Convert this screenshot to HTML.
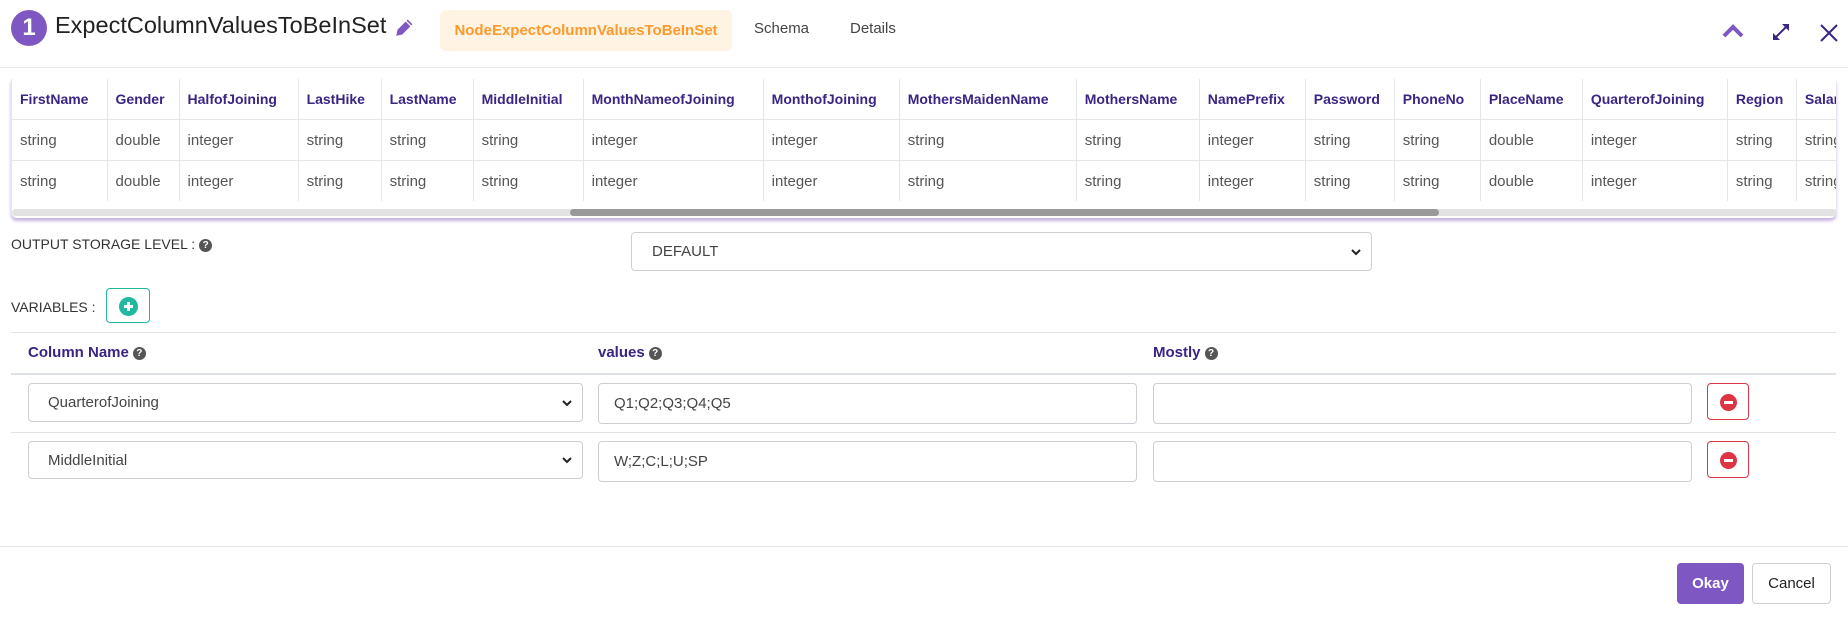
<!DOCTYPE html>
<html><head><meta charset="utf-8"><style>
*{box-sizing:border-box;margin:0;padding:0}
body{width:1848px;height:617px;background:#fff;font-family:"Liberation Sans",Arial,sans-serif;position:relative;overflow:hidden;color:#333}
.a{position:absolute}
.hdr{color:#3b2484;font-weight:bold;font-size:15px}
table{border-collapse:collapse;font-size:15px;table-layout:fixed;width:1860px}
td{border-right:1px solid #e3e6ea;border-bottom:1px solid #e3e6ea;padding:1px 0 0 8px;white-space:nowrap;height:41px;overflow:hidden}
tr:first-child td{height:40px;color:#3b2484;font-weight:bold;font-size:14px;padding-top:0}
tr:not(:first-child) td{color:#555}
tr:last-child td{border-bottom:none}
.box{position:absolute;border:1px solid #ccd0d5;border-radius:4px;background:#fff;font-size:15px;color:#444;display:flex;align-items:center}
.q{display:inline-block;width:13px;height:13px;border-radius:50%;background:#555;color:#fff;font-size:10px;font-weight:bold;text-align:center;line-height:13px;vertical-align:1px;margin-left:4px}
.chev{position:absolute;right:10px;top:50%;margin-top:-6px}
</style></head><body>
<div class="a" style="left:11px;top:10px;width:36px;height:36px;border-radius:50%;background:#7e57c2;color:#fff;font-size:24px;font-weight:bold;text-align:center;line-height:36px">1</div>
<div class="a" style="left:55px;top:12px;font-size:23.5px;color:#222">ExpectColumnValuesToBeInSet</div>
<svg class="a" style="left:394px;top:16px" width="22" height="22" viewBox="0 0 20 20"><path d="M2 18l1.2-5.5L12.5 3.2l4.3 4.3-9.3 9.3z" fill="#7e57c2"/><path d="M11 4.7l4.3 4.3" stroke="#fff" stroke-width="1.2"/></svg>
<div class="a" style="left:440px;top:10px;width:292px;height:41px;background:#fff3e3;border-radius:6px;color:#fd9a2b;font-size:15px;font-weight:bold;text-align:center;line-height:41px">NodeExpectColumnValuesToBeInSet</div>
<div class="a" style="left:754px;top:20px;font-size:15px;color:#444">Schema</div>
<div class="a" style="left:850px;top:20px;font-size:15px;color:#444">Details</div>
<svg class="a" style="left:1722px;top:24px" width="22" height="14" viewBox="0 0 22 14"><path d="M2 12L11 3l9 9" stroke="#7e57c2" stroke-width="4" fill="none"/></svg>
<svg class="a" style="left:1771px;top:22px" width="20" height="20" viewBox="0 0 20 20"><path d="M3 17L17 3" stroke="#3b2484" stroke-width="2"/><path d="M11 2h7v7zM2 11v7h7z" fill="#3b2484"/></svg>
<svg class="a" style="left:1820px;top:24px" width="18" height="18" viewBox="0 0 18 18"><path d="M1 1l16 16M17 1L1 17" stroke="#3b2484" stroke-width="2"/></svg>
<div class="a" style="left:0;top:67px;width:1848px;height:1px;background:#e5e7eb"></div>

<div class="a" style="left:11px;top:79px;width:1825px;height:139px;overflow:hidden;border-left:1px solid #e3e6ea;box-shadow:0 3px 3px rgba(126,87,194,.45);border-radius:0 0 6px 6px">
<table>
<colgroup><col style="width:95px"><col style="width:72px"><col style="width:119px"><col style="width:83px"><col style="width:92px"><col style="width:110px"><col style="width:180px"><col style="width:136px"><col style="width:177px"><col style="width:123px"><col style="width:106px"><col style="width:89px"><col style="width:86px"><col style="width:102px"><col style="width:145px"><col style="width:69px"><col style="width:75px"></colgroup>
<tr><td>FirstName</td><td>Gender</td><td>HalfofJoining</td><td>LastHike</td><td>LastName</td><td>MiddleInitial</td><td>MonthNameofJoining</td><td>MonthofJoining</td><td>MothersMaidenName</td><td>MothersName</td><td>NamePrefix</td><td>Password</td><td>PhoneNo</td><td>PlaceName</td><td>QuarterofJoining</td><td>Region</td><td>Salary</td></tr>
<tr><td>string</td><td>double</td><td>integer</td><td>string</td><td>string</td><td>string</td><td>integer</td><td>integer</td><td>string</td><td>string</td><td>integer</td><td>string</td><td>string</td><td>double</td><td>integer</td><td>string</td><td>string</td></tr>
<tr><td>string</td><td>double</td><td>integer</td><td>string</td><td>string</td><td>string</td><td>integer</td><td>integer</td><td>string</td><td>string</td><td>integer</td><td>string</td><td>string</td><td>double</td><td>integer</td><td>string</td><td>string</td></tr>
</table>
<div class="a" style="left:0;top:130px;width:1825px;height:7px;background:#e2e2e2;border-radius:4px"></div>
<div class="a" style="left:558px;top:130px;width:869px;height:7px;background:#999;border-radius:4px"></div>
</div>

<div class="a" style="left:11px;top:236px;font-size:14px;color:#333">OUTPUT STORAGE LEVEL :<span class="q">?</span></div>
<div class="box" style="left:631px;top:232px;width:741px;height:39px;padding-left:20px">DEFAULT<svg class="chev" width="10" height="12" viewBox="0 0 10 12"><path d="M1 4l4 4 4-4" stroke="#222" stroke-width="2" fill="none"/></svg></div>

<div class="a" style="left:11px;top:299px;font-size:14px;color:#333">VARIABLES :</div>
<div class="a" style="left:106px;top:288px;width:44px;height:35px;border:1px solid #20b89e;border-radius:4px"><div style="position:absolute;left:12px;top:8px;width:19px;height:19px;border-radius:50%;background:#20b89e"></div><div style="position:absolute;left:17px;top:16px;width:9px;height:3px;background:#fff"></div><div style="position:absolute;left:20px;top:13px;width:3px;height:9px;background:#fff"></div></div>

<div class="a" style="left:11px;top:332px;width:1825px;height:1px;background:#e0e3e6"></div>
<div class="a hdr" style="left:28px;top:344px">Column Name<span class="q">?</span></div>
<div class="a hdr" style="left:598px;top:344px">values<span class="q">?</span></div>
<div class="a hdr" style="left:1153px;top:344px">Mostly<span class="q">?</span></div>
<div class="a" style="left:11px;top:373px;width:1825px;height:2px;background:#dee2e6"></div>

<div class="box" style="left:28px;top:383px;width:555px;height:39px;padding-left:19px">QuarterofJoining<svg class="chev" width="10" height="12" viewBox="0 0 10 12"><path d="M1 4l4 4 4-4" stroke="#222" stroke-width="2" fill="none"/></svg></div>
<div class="box" style="left:598px;top:383px;width:539px;height:41px;padding-left:15px">Q1;Q2;Q3;Q4;Q5</div>
<div class="box" style="left:1153px;top:383px;width:539px;height:41px"></div>
<div class="a" style="left:1707px;top:383px;width:42px;height:37px;border:1px solid #dc3545;border-radius:4px"><div style="position:absolute;left:12px;top:10px;width:17px;height:17px;border-radius:50%;background:#dc3545"></div><div style="position:absolute;left:16px;top:17px;width:9px;height:3px;background:#fff"></div></div>
<div class="a" style="left:11px;top:432px;width:1825px;height:1px;background:#e0e3e6"></div>

<div class="box" style="left:28px;top:441px;width:555px;height:38px;padding-left:19px">MiddleInitial<svg class="chev" width="10" height="12" viewBox="0 0 10 12"><path d="M1 4l4 4 4-4" stroke="#222" stroke-width="2" fill="none"/></svg></div>
<div class="box" style="left:598px;top:441px;width:539px;height:41px;padding-left:15px">W;Z;C;L;U;SP</div>
<div class="box" style="left:1153px;top:441px;width:539px;height:41px"></div>
<div class="a" style="left:1707px;top:441px;width:42px;height:37px;border:1px solid #dc3545;border-radius:4px"><div style="position:absolute;left:12px;top:10px;width:17px;height:17px;border-radius:50%;background:#dc3545"></div><div style="position:absolute;left:16px;top:17px;width:9px;height:3px;background:#fff"></div></div>

<div class="a" style="left:0;top:546px;width:1848px;height:1px;background:#e5e7eb"></div>
<div class="a" style="left:1677px;top:563px;width:67px;height:41px;background:#7e57c2;border-radius:4px;color:#fff;font-weight:bold;font-size:15px;text-align:center;line-height:41px">Okay</div>
<div class="a" style="left:1752px;top:563px;width:79px;height:41px;border:1px solid #ccd0d5;border-radius:4px;color:#222;font-size:15px;text-align:center;line-height:39px">Cancel</div>
</body></html>
